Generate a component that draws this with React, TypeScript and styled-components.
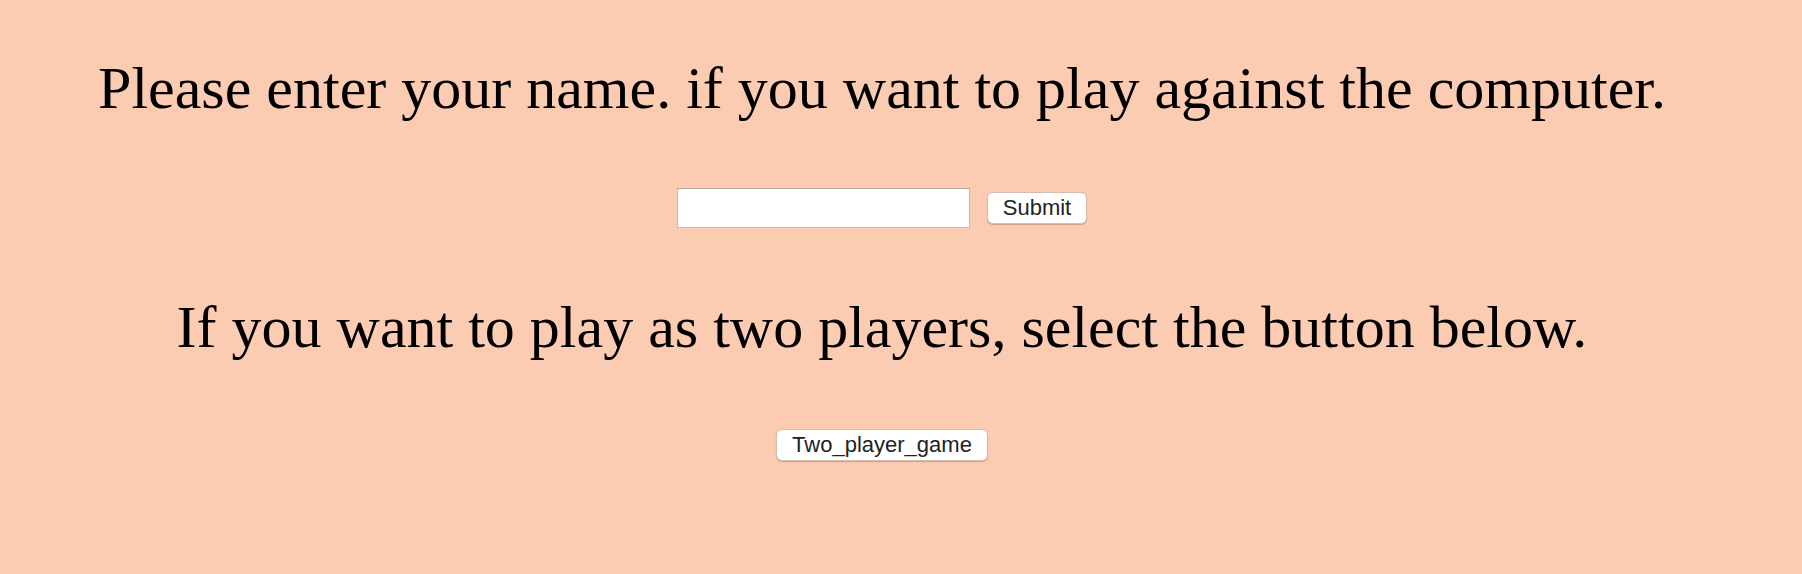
import React from "react";
import styled, { createGlobalStyle } from "styled-components";

const GlobalStyle = createGlobalStyle`
  html, body {
    margin: 0;
    padding: 0;
    background: #fbcbb2;
  }
  body {
    font-family: "Liberation Serif", "Times New Roman", serif;
    color: #000;
  }
`;

const Page = styled.main`
  display: flex;
  flex-direction: column;
  align-items: center;
  width: 1764px;
  padding-top: 53px;
  padding-bottom: 112px;
`;

const Heading = styled.h1<{ $gapAfter: number }>`
  margin: 0 0 ${(p) => p.$gapAfter}px 0;
  font-family: "Liberation Serif", "Times New Roman", serif;
  font-weight: 400;
  font-size: 60px;
  line-height: 70px;
  white-space: nowrap;
  text-align: center;
`;

const FormRow = styled.form<{ $gapAfter: number }>`
  display: flex;
  align-items: center;
  gap: 17px;
  margin: 0 0 ${(p) => p.$gapAfter}px 0;
`;

const NameInput = styled.input`
  box-sizing: border-box;
  width: 293px;
  height: 40px;
  margin: 0;
  padding: 2px 6px;
  background: #fff;
  border: 1px solid #c2bab6;
  border-top-color: #b8a196;
  border-radius: 0;
  font-family: "Liberation Sans", Arial, sans-serif;
  font-size: 20px;
  outline: none;
`;

const Button = styled.button`
  box-sizing: border-box;
  height: 32px;
  margin: 0;
  padding: 0 15px;
  background: #fff;
  color: #222;
  border: 1px solid #d4beb2;
  border-radius: 6px;
  box-shadow: 0 1px 1px rgba(120, 80, 60, 0.35);
  font-family: "Liberation Sans", Arial, sans-serif;
  font-size: 22px;
  line-height: 30px;
  cursor: pointer;
`;

export default function App() {
  return (
    <>
      <GlobalStyle />
      <Page>
        <Heading $gapAfter={65}>
          Please enter your name. if you want to play against the computer.
        </Heading>
        <FormRow $gapAfter={64} onSubmit={(e) => e.preventDefault()}>
          <NameInput type="text" aria-label="Your name" />
          <Button type="submit">Submit</Button>
        </FormRow>
        <Heading $gapAfter={67}>
          If you want to play as two players, select the button below.
        </Heading>
        <Button type="button">Two_player_game</Button>
      </Page>
    </>
  );
}
